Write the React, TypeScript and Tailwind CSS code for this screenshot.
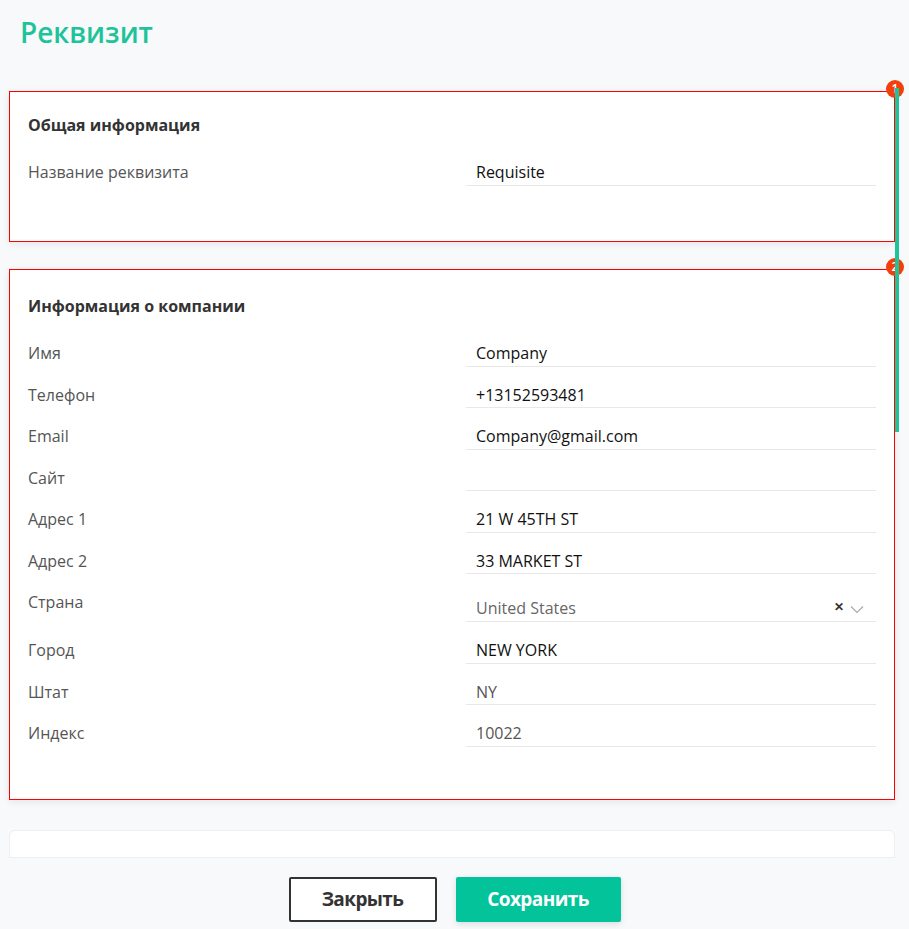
import React from "react";

type Row = { label: string; value: string; muted?: boolean; select?: boolean };

const rows: Row[] = [
  { label: "Имя", value: "Company" },
  { label: "Телефон", value: "+13152593481" },
  { label: "Email", value: "Company@gmail.com" },
  { label: "Сайт", value: "" },
  { label: "Адрес 1", value: "21 W 45TH ST" },
  { label: "Адрес 2", value: "33 MARKET ST" },
  { label: "Страна", value: "United States", select: true },
  { label: "Город", value: "NEW YORK" },
  { label: "Штат", value: "NY", muted: true },
  { label: "Индекс", value: "10022", muted: true },
];

function FieldRow({ row }: { row: Row }) {
  if (row.select) {
    return (
      <div className="flex h-[48px]">
        <div className="w-[438px] shrink-0 pt-[17px] text-[16px] leading-[22px] text-[#555]">{row.label}</div>
        <div className="flex flex-1 items-end border-b border-[#e8e8e8] pb-[2px] pl-[10px]">
          <span className="flex-1 text-[16px] leading-[22px] text-[#666]">{row.value}</span>
          <span className="mb-[5px] mr-[6px] text-[12px] font-bold leading-[14px] text-[#333]">✕</span>
          <svg width="14" height="9" viewBox="0 0 14 9" className="mb-[5px] mr-[12px]">
            <path d="M1 1.5 L7 7.5 L13 1.5" fill="none" stroke="#aaa" strokeWidth="1.2" />
          </svg>
        </div>
      </div>
    );
  }
  return (
    <div className="flex h-[41.5px]">
      <div className="w-[438px] shrink-0 pt-[17px] text-[16px] leading-[22px] text-[#555]">{row.label}</div>
      <div className="flex flex-1 items-end border-b border-[#e8e8e8] pb-[1.5px] pl-[10px]">
        <span className={"text-[16px] leading-[22px] " + (row.muted ? "text-[#555]" : "text-[#111]")}>{row.value}</span>
      </div>
    </div>
  );
}

function Badge({ n }: { n: string }) {
  return (
    <div className="absolute right-[-10px] top-[-12px] flex h-[18px] w-[18px] items-center justify-center rounded-full bg-[#f2400c] text-[12px] font-semibold leading-none text-white">
      {n}
    </div>
  );
}

export default function App() {
  return (
    <div
      className="relative h-[929px] w-[909px] overflow-hidden bg-[#f8f9fb]"
      style={{ fontFamily: '"Open Sans", "Noto Sans", sans-serif' }}
    >
      <div className="h-[88px] pl-[20px] pt-[13px]">
        <h1 className="text-[28px] font-semibold leading-[38px] text-[#1ec39a]">Реквизит</h1>
      </div>

      <div className="flex w-[895px] flex-col pl-[9px] pt-[3px]">
        <div className="relative h-[151px] border border-solid border-[#ff0000] bg-white px-[18px] pt-[23px] shadow-[0_2px_8px_rgba(0,0,0,0.08)]">
          <Badge n="1" />
          <div className="text-[16px] font-bold leading-[20px] text-[#333]">Общая информация</div>
          <div className="mt-[9px]">
            <FieldRow row={{ label: "Название реквизита", value: "Requisite" }} />
          </div>
        </div>

        <div className="relative mt-[27px] h-[531px] border border-solid border-[#ff0000] bg-white px-[18px] pt-[26px] shadow-[0_2px_8px_rgba(0,0,0,0.08)]">
          <Badge n="2" />
          <div className="text-[16px] font-bold leading-[20px] text-[#333]">Информация о компании</div>
          <div className="mt-[9px] flex flex-col">
            {rows.map((r) => (
              <FieldRow key={r.label} row={r} />
            ))}
          </div>
        </div>

        <div className="mt-[30px] h-[28px] rounded-t-[6px] border border-[#eceef1] bg-white" />
      </div>

      <div className="absolute left-[895px] top-[88px] h-[344px] w-[4px] bg-[#1ec39a]" />

      <div className="flex justify-center gap-[19px] pt-[19px]">
        <button className="flex h-[45px] w-[148px] items-center justify-center rounded-[2px] border-2 border-[#333] bg-white text-[19px] font-bold tracking-[-0.6px] text-[#333]">
          Закрыть
        </button>
        <button className="flex h-[45px] w-[165px] items-center justify-center rounded-[2px] bg-[#02c39a] text-[19px] font-bold tracking-[-0.6px] text-white shadow-[0_2px_6px_rgba(0,0,0,0.12)]">
          Сохранить
        </button>
      </div>
    </div>
  );
}
